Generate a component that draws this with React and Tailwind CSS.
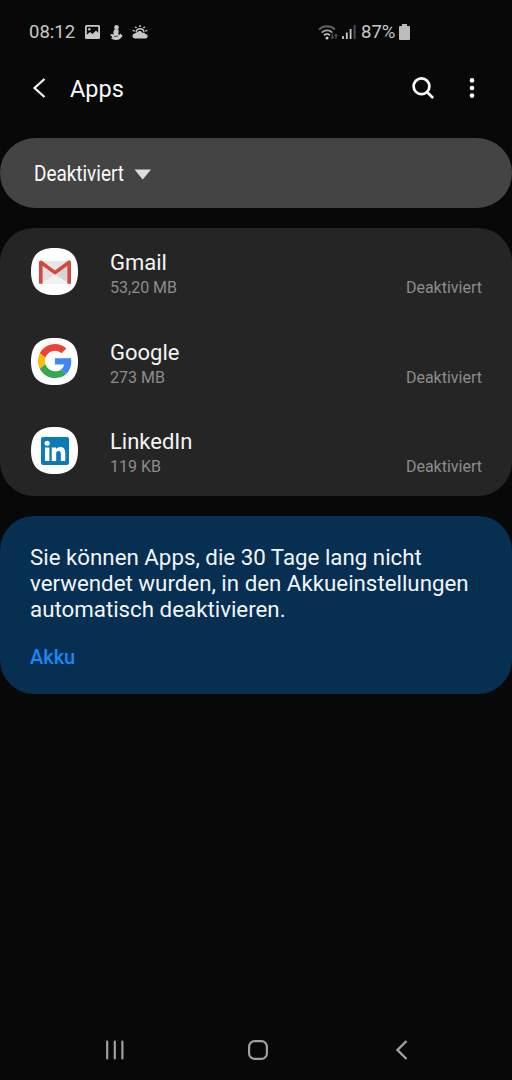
const APPS = [
  { name: 'Gmail', size: '53,20 MB', icon: GmailIcon },
  { name: 'Google', size: '273 MB', icon: GoogleIcon },
  { name: 'LinkedIn', size: '119 KB', icon: LinkedInIcon },
]

function GmailIcon() {
  return (
    <svg width="34" height="26" viewBox="0 0 34 26">
      <path d="M3 2h28v22.600H3z" fill="#e6e6e6" />
      <path d="M3 24.600 17 15l14 9.600z" fill="#f1f1f1" />
      <path d="M3 5l14 10-14 9.600z" fill="#e0e0e0" />
      <path d="M31 5v19.600L17 15z" fill="#d6d6d6" />
      <path d="M2.800 24.800V3.200L17 13.600 31.200 3.200v21.600" fill="none" stroke="#d5473d" strokeWidth="3.600" strokeLinejoin="round" />
    </svg>
  )
}

function GoogleIcon() {
  return (
    <svg width="34" height="34" viewBox="0 0 48 48">
      <path fill="#EA4335" d="M24 9.500c3.540 0 6.710 1.220 9.210 3.600l6.850-6.850C35.900 2.380 30.470 0 24 0 14.620 0 6.510 5.380 2.560 13.220l7.980 6.190C12.430 13.720 17.740 9.500 24 9.500z" />
      <path fill="#4285F4" d="M46.980 24.550c0-1.570-.15-3.090-.38-4.550H24v9.020h12.940c-.58 2.960-2.260 5.480-4.780 7.180l7.730 6c4.510-4.180 7.090-10.360 7.090-17.650z" />
      <path fill="#FBBC05" d="M10.530 28.590c-.48-1.450-.76-2.990-.76-4.590s.27-3.140.76-4.590l-7.980-6.190C.920 16.460 0 20.120 0 24c0 3.880.92 7.540 2.560 10.780z" />
      <path fill="#34A853" d="M24 48c6.480 0 11.930-2.130 15.890-5.810l-7.730-6c-2.150 1.450-4.920 2.300-8.160 2.300-6.260 0-11.570-4.220-13.470-9.910l-7.980 6.190C6.510 42.620 14.620 48 24 48z" />
    </svg>
  )
}

function LinkedInIcon() {
  return (
    <svg width="28" height="28" viewBox="0 0 24 24">
      <rect width="24" height="24" rx="1.700" fill="#0b7bb5" />
      <g fill="#fff">
        <circle cx="5.300" cy="5.400" r="2.200" />
        <path d="M3.400 9h3.800v11.500H3.400zM9.200 9h3.700v1.500c.6-1 1.800-1.850 3.500-1.850 3.500 0 4.400 2.300 4.400 5.400v6.450H17v-5.600c0-1.400-.1-3-1.900-3s-2.100 1.400-2.100 2.900v5.700H9.200z" />
      </g>
    </svg>
  )
}

function StatusBar() {
  return (
    <div className="flex h-16 items-center pl-[29px] text-[#c8c8c8]">
      <span className="w-[55px] pt-0.5 text-[18.500px]">08:12</span>
      <svg className="ml-px" width="15" height="14" viewBox="0 0 15 14">
        <path fillRule="evenodd" fill="currentColor" d="M1.500 0h12A1.500 1.500 0 0 1 15 1.500v11a1.500 1.500 0 0 1-1.500 1.500h-12A1.500 1.500 0 0 1 0 12.500v-11A1.500 1.500 0 0 1 1.500 0zM1.800 1.800v8L5 7l2.500 2L11 5.500l2.200 2.300v-6zM4.300 3a1.300 1.300 0 1 1 0 2.600 1.300 1.300 0 0 1 0-2.600z" />
      </svg>
      <svg className="ml-2.5" width="13" height="15" viewBox="0 0 13 15" fill="currentColor">
        <circle cx="6.500" cy="2.400" r="2.300" />
        <path d="M4.800 4.200 8 4.300c.9 1.200.9 2.800.3 4L9 10.500l1.200-2 2.600 2.400-1.400 1.300C10.500 14 8.700 15 6.300 15c-2.600 0-4.400-.7-5.300-2l1.600-.8L0 9.800l2.300-1L4 10.300C3.600 8.500 2.600 6.500 4.800 4.200z" />
        <path d="m4.300 11.600 3.500-.6" stroke="#080808" strokeWidth=".7" />
      </svg>
      <svg className="ml-[9px]" width="16" height="14" viewBox="0 0 16 14">
        <path d="M8 0v2M3.300 1.600l1.200 1.600M12.700 1.600l-1.200 1.600M.6 5.400l2 .6M15.400 5.400l-2 .6" stroke="currentColor" strokeWidth="1.400" />
        <path d="M4 7.200a4.100 4.100 0 0 1 8.100 0" fill="none" stroke="currentColor" strokeWidth="1.300" />
        <path fill="currentColor" d="M3 13.500a2.500 2.500 0 0 1-.2-5A5.200 5.200 0 0 1 5.500 7C6.500 5.500 9.500 5.300 10.700 8c1.200-.5 2.300.2 2.500 1 3.500.3 3 4.500.2 4.500z" />
      </svg>

      <svg className="ml-[170px]" width="21" height="17" viewBox="0 0 21 17" fill="none">
        <path d="M1 5.500a11.500 11.500 0 0 1 16 0" stroke="#606060" strokeWidth="1.800" />
        <path d="M3.600 8.600a7.800 7.800 0 0 1 10.800 0" stroke="#a0a0a0" strokeWidth="1.700" />
        <path d="M6 11.300a4.300 4.300 0 0 1 6 0" stroke="#ccc" strokeWidth="1.700" />
        <circle cx="9" cy="13.900" r="1.500" fill="#ccc" />
        <path d="M14.300 10v4.500M12.800 13l1.500 1.600 1.500-1.600M18 15v-4.500M16.500 12 18 10.400l1.500 1.600" stroke="#666" />
      </svg>
      <svg className="ml-[3px]" width="14" height="14" viewBox="0 0 14 14">
        <path d="M1 11v3M4.800 7.500V14M8.600 4v10" stroke="#c8c8c8" strokeWidth="1.800" />
        <path d="M12.600 0v14" stroke="#555" strokeWidth="1.800" />
      </svg>
      <span className="ml-[5px] w-[35px] pt-0.5 text-[18.500px]">87%</span>
      <svg className="ml-[3px]" width="11" height="16" viewBox="0 0 11 16" fill="#bcbcbc">
        <path d="M3 0h5v2h2a1 1 0 0 1 1 1v12a1 1 0 0 1-1 1H1a1 1 0 0 1-1-1V3a1 1 0 0 1 1-1h2z" />
      </svg>
    </div>
  )
}

function TitleBar() {
  return (
    <header className="flex h-12 items-center pl-8 text-[#fafafa]">
      <svg width="14" height="20" viewBox="0 0 14 20" fill="none" stroke="currentColor" strokeWidth="2.200">
        <path d="M12.500 1 2.500 10l10 9" />
      </svg>
      <h1 className="ml-6 w-[342px] pt-0.5 text-[23.500px] leading-7">Apps</h1>
      <svg width="22" height="22" viewBox="0 0 22 22" fill="none" stroke="currentColor" strokeWidth="2.700">
        <circle cx="9.500" cy="9.300" r="7.900" />
        <path d="m15 15 5.300 5.300" strokeLinecap="round" />
      </svg>
      <svg className="ml-[35px]" width="6" height="20" viewBox="0 0 6 20" fill="currentColor">
        <circle cx="3" cy="2.400" r="2.300" />
        <circle cx="3" cy="10" r="2.300" />
        <circle cx="3" cy="17.600" r="2.300" />
      </svg>
    </header>
  )
}

function AppRow({ app }) {
  return (
    <li className="flex h-[89.500px] items-start pl-[31px] pr-[30px] pt-5">
      <span className="grid size-[47px] shrink-0 place-items-center *:col-start-1 *:row-start-1">
        <svg width="47" height="47" viewBox="0 0 47 47">
          <path fill="#fff" d="M23.500 0C39.500 0 47 7.500 47 23.500S39.500 47 23.500 47 0 39.500 0 23.500 7.500 0 23.500 0z" />
        </svg>
        <app.icon />
      </span>
      <div className="ml-8 flex-1">
        <p className="text-[22px] leading-[30px] text-[#f4f4f4]">{app.name}</p>
        <div className="flex justify-between text-base leading-5 text-[#8c8c8c]">
          <span>{app.size}</span>
          <span>Deaktiviert</span>
        </div>
      </div>
    </li>
  )
}

function NavBar() {
  return (
    <nav className="mt-auto flex h-[61px] items-center pl-[105px]">
      <svg width="20" height="20" viewBox="0 0 20 20" stroke="#a0a0a0" strokeWidth="2.200" strokeLinecap="round">
        <path d="M2.200 1.500v17M9.800 1.500v17M17.400 1.500v17" />
      </svg>
      <svg className="ml-[123px]" width="20" height="20" viewBox="0 0 20 20" fill="none" stroke="#a0a0a0" strokeWidth="2.200">
        <rect x="1.100" y="1.100" width="17.800" height="17.800" rx="5.500" />
      </svg>
      <svg className="ml-[127px]" width="13" height="20" viewBox="0 0 13 20" fill="none" stroke="#a0a0a0" strokeWidth="2.400">
        <path d="M11.500 1 2.500 10l9 9" />
      </svg>
    </nav>
  )
}

export default function App() {
  return (
    <div className="flex h-[1080px] w-[512px] flex-col overflow-hidden bg-[#080808] font-['Roboto',sans-serif]">
      <StatusBar />
      <TitleBar />

      <button className="mt-[26px] flex h-[70px] shrink-0 items-center rounded-[35px] bg-[#444] pl-[34px] text-left">
        <span className="w-[100px] origin-left scale-x-[0.86] text-[22px] text-[#fafafa]">Deaktiviert</span>
        <svg className="mt-0.5" width="18" height="11" viewBox="0 0 18 11">
          <path d="M.5.500h16.500L8.700 10.500z" fill="#ddd" />
        </svg>
      </button>

      <ul className="mt-5 h-[268px] shrink-0 rounded-[34px] bg-[#252525]">
        {APPS.map(app => (
          <AppRow key={app.name} app={app} />
        ))}
      </ul>

      <section className="mt-5 h-[178px] shrink-0 rounded-[34px] bg-[#062f51] pl-[30px] pt-7">
        <p className="text-[22.300px] leading-[26px] whitespace-nowrap text-[#f2f6fa]">
          Sie können Apps, die 30 Tage lang nicht<br />
          verwendet wurden, in den Akkueinstellungen<br />
          automatisch deaktivieren.
        </p>
        <a className="mt-[22px] block text-xl leading-[26px] font-medium text-[#1a88f8]">Akku</a>
      </section>

      <NavBar />
    </div>
  )
}
